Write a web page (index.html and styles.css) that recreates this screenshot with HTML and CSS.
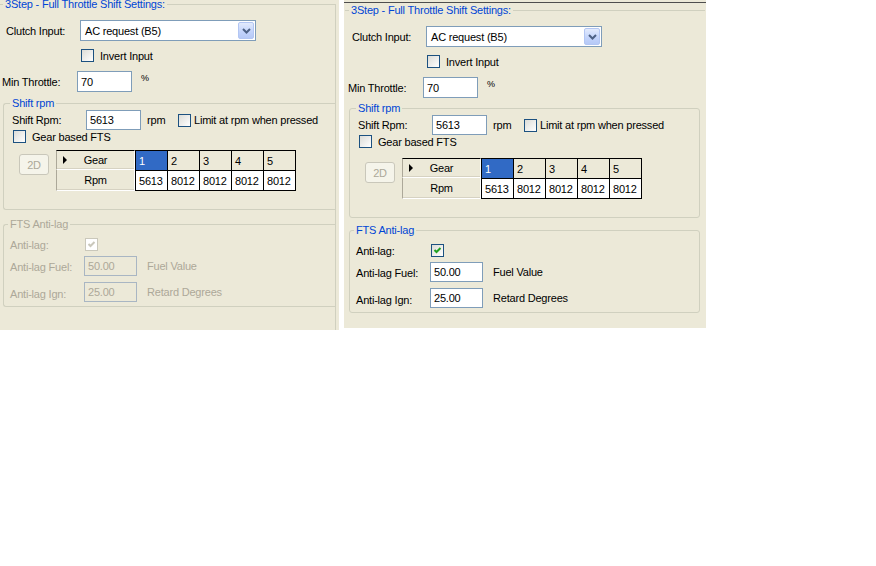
FILE: index.html
```html
<!DOCTYPE html>
<html lang="en">
<head>
  <meta charset="UTF-8">
  <title>3Step - Full Throttle Shift Settings</title>
  <link rel="stylesheet" href="styles.css">
</head>
<body>
  <div class="screen">
    <!-- older capture: anti-lag disabled -->
    <div class="panel panel-left">
      <div class="dialog">
        <fieldset class="group outer">
          <legend>3Step - Full Throttle Shift Settings:</legend>
          <div class="row row-clutch">
            <span class="lbl-clutch">Clutch Input:</span>
            <div class="combo">
              <span>AC request (B5)</span>
              <span class="combo-btn"><svg width="9" height="6" viewBox="0 0 9 6"><path d="M1 1 L4.5 4.5 L8 1" fill="none" stroke="#4d6185" stroke-width="2"/></svg></span>
            </div>
          </div>
          <div class="row row-invert">
            <span class="check"></span><span class="check-text">Invert Input</span>
          </div>
          <div class="row row-throttle">
            <span class="lbl-throttle">Min Throttle:</span>
            <span class="field w55">70</span>
            <span class="unit-pct">%</span>
          </div>

          <fieldset class="group inner shift">
            <legend>Shift rpm</legend>
            <div class="row row-shiftrpm">
              <span class="lbl-shift">Shift Rpm:</span>
              <span class="field w55">5613</span>
              <span class="unit-rpm">rpm</span>
              <span class="check"></span><span class="check-text tight">Limit at rpm when pressed</span>
            </div>
            <div class="row row-gear">
              <span class="check"></span><span class="check-text">Gear based FTS</span>
            </div>
            <div class="row row-grid">
              <span class="btn-2d">2D</span>
              <div class="grid">
                <div class="rh rh-top"><i class="arrow"></i>Gear</div>
                <div class="c c-top sel">1</div>
                <div class="c c-top">2</div>
                <div class="c c-top">3</div>
                <div class="c c-top">4</div>
                <div class="c c-top last">5</div>
                <div class="rh">Rpm</div>
                <div class="c c-bot">5613</div>
                <div class="c c-bot">8012</div>
                <div class="c c-bot">8012</div>
                <div class="c c-bot">8012</div>
                <div class="c c-bot last">8012</div>
              </div>
            </div>
          </fieldset>

          <fieldset class="group inner antilag disabled">
            <legend>FTS Anti-lag</legend>
            <div class="row row-al">
              <span class="lbl-al">Anti-lag:</span>
              <span class="check checked"><svg width="11" height="11" viewBox="0 0 11 11"><path d="M2.5 5 L4.5 7 L8.5 3" fill="none" stroke="#cac8bb" stroke-width="2"/></svg></span>
            </div>
            <div class="row row-fuel">
              <span class="lbl-fuel">Anti-lag Fuel:</span>
              <span class="field w53">50.00</span>
              <span class="unit-al">Fuel Value</span>
            </div>
            <div class="row row-ign">
              <span class="lbl-fuel lbl-low">Anti-lag Ign:</span>
              <span class="field w53">25.00</span>
              <span class="unit-al">Retard Degrees</span>
            </div>
          </fieldset>
        </fieldset>
      </div>
    </div>

    <!-- current capture -->
    <div class="panel panel-right">
      <div class="topline"></div>
      <div class="dialog">
        <fieldset class="group outer">
          <legend>3Step - Full Throttle Shift Settings:</legend>
          <div class="row row-clutch">
            <span class="lbl-clutch">Clutch Input:</span>
            <div class="combo">
              <span>AC request (B5)</span>
              <span class="combo-btn"><svg width="9" height="6" viewBox="0 0 9 6"><path d="M1 1 L4.5 4.5 L8 1" fill="none" stroke="#4d6185" stroke-width="2"/></svg></span>
            </div>
          </div>
          <div class="row row-invert">
            <span class="check"></span><span class="check-text">Invert Input</span>
          </div>
          <div class="row row-throttle">
            <span class="lbl-throttle">Min Throttle:</span>
            <span class="field w55">70</span>
            <span class="unit-pct">%</span>
          </div>

          <fieldset class="group inner shift">
            <legend>Shift rpm</legend>
            <div class="row row-shiftrpm">
              <span class="lbl-shift">Shift Rpm:</span>
              <span class="field w55">5613</span>
              <span class="unit-rpm">rpm</span>
              <span class="check"></span><span class="check-text tight">Limit at rpm when pressed</span>
            </div>
            <div class="row row-gear">
              <span class="check"></span><span class="check-text">Gear based FTS</span>
            </div>
            <div class="row row-grid">
              <span class="btn-2d">2D</span>
              <div class="grid">
                <div class="rh rh-top"><i class="arrow"></i>Gear</div>
                <div class="c c-top sel">1</div>
                <div class="c c-top">2</div>
                <div class="c c-top">3</div>
                <div class="c c-top">4</div>
                <div class="c c-top last">5</div>
                <div class="rh">Rpm</div>
                <div class="c c-bot">5613</div>
                <div class="c c-bot">8012</div>
                <div class="c c-bot">8012</div>
                <div class="c c-bot">8012</div>
                <div class="c c-bot last">8012</div>
              </div>
            </div>
          </fieldset>

          <fieldset class="group inner antilag">
            <legend>FTS Anti-lag</legend>
            <div class="row row-al">
              <span class="lbl-al">Anti-lag:</span>
              <span class="check checked"><svg width="11" height="11" viewBox="0 0 11 11"><path d="M2.5 5 L4.5 7 L8.5 3" fill="none" stroke="#21a121" stroke-width="2"/></svg></span>
            </div>
            <div class="row row-fuel">
              <span class="lbl-fuel">Anti-lag Fuel:</span>
              <span class="field w53">50.00</span>
              <span class="unit-al">Fuel Value</span>
            </div>
            <div class="row row-ign">
              <span class="lbl-fuel lbl-low">Anti-lag Ign:</span>
              <span class="field w53">25.00</span>
              <span class="unit-al">Retard Degrees</span>
            </div>
          </fieldset>
        </fieldset>
      </div>
    </div>
  </div>
</body>
</html>
```

FILE: styles.css
```css
body {
  margin: 0;
  background: #ffffff;
  font-family: "Liberation Sans", Arial, sans-serif;
  font-size: 11px;
  letter-spacing: -0.2px;
  color: #000;
}

.screen {
  display: flex;
  align-items: flex-start;
  gap: 5px;
}

.panel {
  flex: none;
  background: #ece9d8;
  overflow: hidden;
}

.panel-left {
  width: 339px;
  height: 330px;
}

.panel-right {
  width: 362px;
  height: 328px;
}

.topline {
  margin-top: 2px;
  height: 1px;
  background: #4e4e4e;
}

.panel-left .dialog {
  margin: -3px 0 0 -2px;
}

/* group boxes */
.group {
  margin: 0;
  padding: 0;
  min-width: 0;
  box-sizing: border-box;
  border: 1px solid #d0d0bf;
  border-radius: 3px;
}

.group legend {
  padding: 0 2px;
  line-height: 14px;
  color: #0046d5;
}

.outer {
  margin-left: 1px;
  border-left: none;
  border-right: none;
  border-bottom: none;
  border-radius: 0;
}

.outer > legend {
  margin-left: 4px;
}

.panel-right .outer {
  width: 360px;
}

.panel-left .outer {
  width: 337px;
  height: 345px;
  border-right: 1px solid #d0d0bf;
}

.inner {
  margin-left: 4px;
  width: 351px;
}

.panel-left .inner {
  width: 332px;
  border-right: none;
  border-radius: 3px 0 0 3px;
}

.shift {
  margin-top: 3px;
  padding-bottom: 18px;
}

.shift > legend {
  margin-left: 6px;
}

.antilag {
  margin-top: 5px;
  padding-bottom: 4px;
}

.antilag > legend {
  margin-left: 4px;
}

.panel-left .shift {
  margin-top: 4px;
}

.panel-left .row-grid {
  margin-top: 7px;
}

.panel-left .antilag {
  margin-top: 7px;
}

/* rows */
.row {
  display: flex;
  align-items: center;
}

.row-clutch { margin-top: 9px; height: 21px; }
.row-invert { margin-top: 8px; height: 13px; padding-left: 82px; }
.row-throttle { margin-top: 9px; height: 21px; }
.row-shiftrpm { height: 20px; }
.row-gear { margin-top: 0; height: 13px; padding-left: 9px; }
.row-grid { margin-top: 10px; height: 41px; align-items: flex-start; }
.row-al { margin-top: 7px; height: 13px; }
.row-fuel { margin-top: 5px; height: 20px; }
.row-ign { margin-top: 6px; height: 20px; }

.lbl-clutch { margin-left: 7px; width: 74px; flex: none; }
.lbl-throttle { margin-left: 3px; width: 75px; flex: none; }
.lbl-shift { margin-left: 8px; width: 74px; flex: none; }
.lbl-al { margin-left: 6px; width: 75px; flex: none; }
.lbl-fuel { margin-left: 6px; width: 74px; flex: none; padding-top: 1px; }
.lbl-low { padding-top: 4px; }

/* controls */
.combo {
  width: 176px;
  height: 21px;
  box-sizing: border-box;
  border: 1px solid #7f9db9;
  background: #fff;
  display: flex;
  align-items: center;
  padding-left: 4px;
}

.combo-btn {
  margin-left: auto;
  margin-right: 1px;
  width: 16px;
  height: 17px;
  box-sizing: border-box;
  border: 1px solid #b3c6f3;
  border-radius: 2px;
  background: linear-gradient(#e3ebfd, #c2d3fb 60%, #b6c9f6);
  display: flex;
  align-items: center;
  justify-content: center;
}

.field {
  height: 100%;
  box-sizing: border-box;
  border: 1px solid #7f9db9;
  background: #fff;
  display: flex;
  align-items: center;
  padding-left: 3px;
  flex: none;
}

.w55 { width: 55px; }
.w53 { width: 53px; }

.unit-pct {
  align-self: flex-start;
  margin: 2px 0 0 9px;
  font-size: 9px;
}

.unit-rpm {
  margin-left: 6px;
  width: 31px;
  flex: none;
}

.unit-al {
  margin-left: 10px;
}

.check {
  width: 13px;
  height: 13px;
  flex: none;
  box-sizing: border-box;
  border: 1px solid #1c5180;
  background: linear-gradient(135deg, #dcdcd7, #ffffff);
  display: flex;
  align-items: center;
  justify-content: center;
}

.check-text {
  margin-left: 6px;
}

.check-text.tight {
  margin-left: 3px;
}

.btn-2d {
  margin: 4px 0 0 15px;
  width: 30px;
  height: 21px;
  box-sizing: border-box;
  border: 1px solid #c9c7ba;
  border-radius: 3px;
  background: #f5f4ea;
  color: #aca899;
  display: flex;
  align-items: center;
  justify-content: center;
  flex: none;
}

/* gear table */
.grid {
  margin-left: 7px;
  display: grid;
  grid-template-columns: 79px 32px 32px 32px 32px 33px;
  grid-template-rows: 20px 21px;
}

.rh {
  position: relative;
  box-sizing: border-box;
  background: #ece9d8;
  border-left: 1px solid #aca899;
  border-right: 1px solid #fff;
  border-bottom: 1px solid #fff;
  box-shadow: inset 0 -1px #d6d2c2;
  display: flex;
  align-items: center;
  justify-content: center;
}

.rh-top {
  border-top: 1px solid #000;
}

.arrow {
  position: absolute;
  left: 6px;
  top: 5px;
  width: 0;
  height: 0;
  border-top: 4px solid transparent;
  border-bottom: 4px solid transparent;
  border-left: 4px solid #000;
}

.c {
  box-sizing: border-box;
  border-left: 1px solid #000;
  border-top: 1px solid #000;
  padding-left: 3px;
  display: flex;
  align-items: center;
}

.c-top {
  background: #ece9d8;
}

.c-bot {
  background: #fff;
  border-bottom: 1px solid #000;
}

.c.last {
  border-right: 1px solid #000;
}

.c.sel {
  background: #316ac5;
  color: #fff;
}

/* disabled section */
.disabled,
.disabled legend {
  color: #aca899;
}

.disabled .field {
  background: #ece9d8;
  border-color: #a9b6c3;
}

.disabled .check {
  border-color: #cac8bb;
  background: #fff;
}
```
